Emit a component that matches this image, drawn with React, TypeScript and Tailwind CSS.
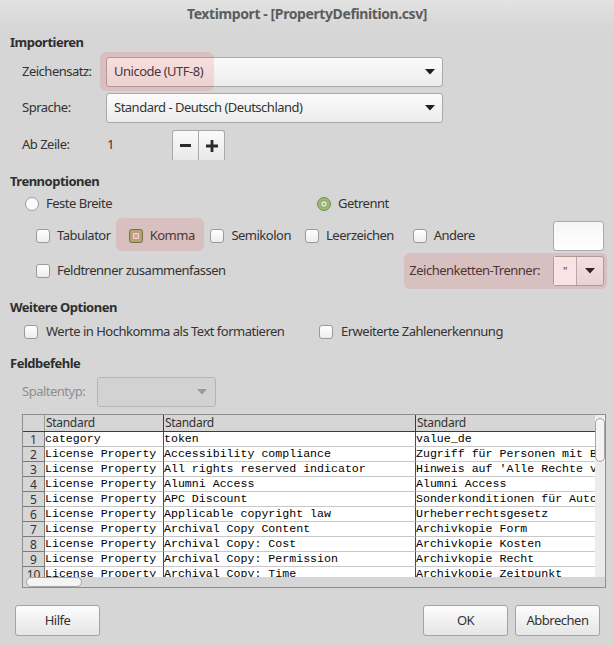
import React from "react";

const rows: [string, string, string][] = [
  ["category", "token", "value_de"],
  ["License Property", "Accessibility compliance", "Zugriff für Personen mit Behinderungen"],
  ["License Property", "All rights reserved indicator", "Hinweis auf 'Alle Rechte vorbehalten'"],
  ["License Property", "Alumni Access", "Alumni Access"],
  ["License Property", "APC Discount", "Sonderkonditionen für Autoren"],
  ["License Property", "Applicable copyright law", "Urheberrechtsgesetz"],
  ["License Property", "Archival Copy Content", "Archivkopie Form"],
  ["License Property", "Archival Copy: Cost", "Archivkopie Kosten"],
  ["License Property", "Archival Copy: Permission", "Archivkopie Recht"],
  ["License Property", "Archival Copy: Time", "Archivkopie Zeitpunkt"],
];

function Arrow({ color = "#1e1e1e" }: { color?: string }) {
  return (
    <svg width="10" height="6" viewBox="0 0 10 6">
      <polygon points="0,0 10,0 5,5.5" fill={color} />
    </svg>
  );
}

function Combo({ value, className }: { value: string; className: string }) {
  return (
    <div
      className={`flex h-[30px] items-center justify-between rounded-[3px] border border-[#a9a9a9] bg-gradient-to-b from-[#fbfbfb] to-[#ececec] pl-[7px] pr-[7px] text-[#333] ${className}`}
    >
      <span>{value}</span>
      <Arrow />
    </div>
  );
}

function Checkbox({ checked = false }: { checked?: boolean }) {
  if (checked) {
    return (
      <svg width="14" height="14" viewBox="0 0 14 14" className="shrink-0">
        <rect x="0.5" y="0.5" width="13" height="13" rx="2" fill="#aab57a" stroke="#6b7548" />
        <rect x="4" y="4" width="6" height="6" fill="#f6f2ee" />
        <path d="M5 5 L9 9 M9 5 L5 9" stroke="#c9a0a0" strokeWidth="1.2" />
      </svg>
    );
  }
  return (
    <span className="block h-[14px] w-[14px] shrink-0 rounded-[3px] border border-[#9a9a9a] bg-gradient-to-b from-white to-[#ededed]" />
  );
}

function Radio({ checked = false }: { checked?: boolean }) {
  return (
    <svg width="14" height="14" viewBox="0 0 14 14" className="shrink-0">
      {checked ? (
        <>
          <circle cx="7" cy="7" r="6.5" fill="#9dbb74" stroke="#6f8f4c" />
          <circle cx="7" cy="7" r="3.3" fill="#f2f2f2" stroke="#6f8f4c" strokeWidth="0.8" />
          <circle cx="7" cy="7" r="1.6" fill="#9fb58a" />
        </>
      ) : (
        <circle cx="7" cy="7" r="6.5" fill="#fafafa" stroke="#9a9a9a" />
      )}
    </svg>
  );
}

function Highlight({ className }: { className: string }) {
  return (
    <div
      className={`pointer-events-none absolute rounded-[6px] bg-[rgba(225,70,70,0.15)] ${className}`}
    />
  );
}

function Button({ label, className }: { label: string; className: string }) {
  return (
    <button
      className={`h-[31px] rounded-[3px] border border-[#a3a3a3] bg-gradient-to-b from-[#fcfcfc] to-[#e6e6e6] text-[#333] ${className}`}
    >
      {label}
    </button>
  );
}

function DataTable() {
  return (
    <div className="mt-[7px] flex h-[174px] w-[584px] flex-col border border-[#8e8e8e] bg-[#d6d6d6]">
      <div className="flex min-h-0 flex-1">
        <div className="w-[572px] overflow-hidden bg-white font-['Liberation_Mono',monospace] text-[11.6px] tracking-normal text-black">
          <div className="flex h-[17px] border-b border-[#3c3c3c] bg-[#d6d6d6] font-['Noto_Sans',sans-serif] text-[12px] leading-[16px] tracking-[-0.3px] text-[#333]">
            <div className="w-[22px] shrink-0 border-r border-[#9a9a9a]" />
            <div className="w-[119px] shrink-0 border-r border-[#3c3c3c] pl-[1px]">Standard</div>
            <div className="w-[252px] shrink-0 border-r border-[#3c3c3c] pl-[1px]">Standard</div>
            <div className="flex-1 pl-[1px]">Standard</div>
          </div>
          {rows.map((r, i) => (
            <div key={i} className="flex h-[15px] leading-[14px]">
              <div className="flex w-[22px] shrink-0 items-end justify-center overflow-hidden border-b border-r border-[#7a7a7a] bg-[#d6d6d6] font-['Noto_Sans',sans-serif] text-[12px] text-[#333]">
                <span className="leading-none">{i + 1}</span>
              </div>
              <div className="w-[119px] shrink-0 overflow-hidden whitespace-pre border-b border-r border-b-[#c8c8c8] border-r-[#4a4a4a]">
                {r[0]}
              </div>
              <div className="w-[252px] shrink-0 overflow-hidden whitespace-pre border-b border-r border-b-[#c8c8c8] border-r-[#4a4a4a]">
                {r[1]}
              </div>
              <div className="flex-1 overflow-hidden whitespace-pre border-b border-[#c8c8c8]">
                {r[2]}
              </div>
            </div>
          ))}
        </div>
        <div className="w-[10px] bg-[#ececec] pt-[3px]">
          <div className="h-[44px] w-[10px] rounded-[5px] border border-[#a6a6a6] bg-[#f4f4f4]" />
        </div>
      </div>
      <div className="h-[10px] pl-[3px]">
        <div className="h-[10px] w-[56px] rounded-[5px] border border-[#a6a6a6] bg-[#f4f4f4]" />
      </div>
    </div>
  );
}

export default function App() {
  return (
    <div className="flex h-[646px] w-[614px] flex-col overflow-hidden bg-[#d6d6d6] font-['Noto_Sans','DejaVu_Sans',sans-serif] text-[13px] tracking-[-0.5px] text-[#333]">
      <div className="flex h-[27px] shrink-0 items-center justify-center bg-gradient-to-b from-[#e3e3e3] to-[#d6d6d6] text-[14px] font-bold tracking-[-0.4px] text-[#5c5c5c]">
        Textimport - [PropertyDefinition.csv]
      </div>

      <div className="flex flex-col px-[10px]">
        <div className="mt-[6px] h-[18px] font-bold leading-[18px] text-[#2e2e2e]">Importieren</div>

        <div className="relative mt-[6px] flex items-center pl-[12px]">
          <span className="w-[84px]">Zeichensatz:</span>
          <Combo value="Unicode (UTF-8)" className="w-[337px]" />
          <Highlight className="left-[90px] top-[-5px] h-[39px] w-[114px]" />
        </div>

        <div className="mt-[6px] flex items-center pl-[12px]">
          <span className="w-[84px]">Sprache:</span>
          <Combo value="Standard - Deutsch (Deutschland)" className="w-[337px]" />
        </div>

        <div className="mt-[7px] flex items-center pl-[12px]">
          <span className="w-[85px]">Ab Zeile:</span>
          <span className="w-[65px]">1</span>
          <div className="flex h-[30px]">
            <div className="flex w-[27px] items-center justify-center rounded-tl-[3px] border border-b-0 border-[#a9a9a9] bg-gradient-to-b from-[#fbfbfb] to-[#e8e8e8]">
              <span className="block h-[3px] w-[11px] bg-[#2b2b2b]" />
            </div>
            <div className="flex w-[26px] items-center justify-center rounded-tr-[3px] border border-b-0 border-l-0 border-[#a9a9a9] bg-gradient-to-b from-[#fbfbfb] to-[#e8e8e8]">
              <svg width="12" height="12" viewBox="0 0 12 12">
                <path d="M4.6 0 H7.4 V4.6 H12 V7.4 H7.4 V12 H4.6 V7.4 H0 V4.6 H4.6 Z" fill="#2b2b2b" />
              </svg>
            </div>
          </div>
        </div>

        <div className="mt-[12px] h-[18px] font-bold leading-[18px] text-[#2e2e2e]">Trennoptionen</div>

        <div className="mt-[4px] flex h-[20px] items-center pl-[15px]">
          <div className="flex w-[292px] items-center gap-[7px]">
            <Radio />
            <span>Feste Breite</span>
          </div>
          <div className="flex items-center gap-[7px]">
            <Radio checked />
            <span>Getrennt</span>
          </div>
        </div>

        <div className="relative mt-[7px] flex h-[30px] items-center pl-[26px]">
          <div className="flex w-[93px] items-center gap-[7px]">
            <Checkbox />
            <span>Tabulator</span>
          </div>
          <div className="flex w-[82px] items-center gap-[7px]">
            <Checkbox checked />
            <span>Komma</span>
          </div>
          <div className="flex w-[95px] items-center gap-[7px]">
            <Checkbox />
            <span>Semikolon</span>
          </div>
          <div className="flex w-[108px] items-center gap-[7px]">
            <Checkbox />
            <span>Leerzeichen</span>
          </div>
          <div className="flex w-[141px] items-center gap-[7px]">
            <Checkbox />
            <span>Andere</span>
          </div>
          <div className="h-[30px] w-[51px] rounded-[3px] border border-[#a9a9a9] bg-gradient-to-b from-[#f6f6f6] to-white" />
          <Highlight className="left-[106px] top-[-3px] h-[33px] w-[88px]" />
        </div>

        <div className="relative mt-[5px] flex h-[30px] items-center pl-[26px]">
          <div className="flex flex-1 items-center gap-[7px]">
            <Checkbox />
            <span>Feldtrenner zusammenfassen</span>
          </div>
          <span className="mr-[13px]">Zeichenketten-Trenner:</span>
          <div className="flex h-[30px] w-[51px] rounded-[3px] border border-[#a9a9a9] bg-gradient-to-b from-[#fbfbfb] to-[#ececec]">
            <div className="flex w-[23px] items-center justify-center border-r border-[#b8b8b8] bg-white text-[11px]">"</div>
            <div className="flex flex-1 items-center justify-center">
              <Arrow />
            </div>
          </div>
          <Highlight className="left-[394px] top-[-3px] h-[36px] w-[203px]" />
        </div>

        <div className="mt-[12px] h-[18px] font-bold leading-[18px] text-[#2e2e2e]">Weitere Optionen</div>

        <div className="mt-[6px] flex h-[20px] items-center pl-[14px]">
          <div className="flex w-[295px] items-center gap-[8px]">
            <Checkbox />
            <span>Werte in Hochkomma als Text formatieren</span>
          </div>
          <div className="flex items-center gap-[8px]">
            <Checkbox />
            <span>Erweiterte Zahlenerkennung</span>
          </div>
        </div>

        <div className="mt-[12px] h-[18px] font-bold leading-[18px] text-[#2e2e2e]">Feldbefehle</div>

        <div className="mt-[5px] flex h-[30px] items-center pl-[12px]">
          <span className="w-[75px] text-[#8e8e8e]">Spaltentyp:</span>
          <div className="flex h-[30px] w-[119px] items-center justify-end rounded-[3px] border border-[#b4b4b4] bg-[#d2d2d2] pr-[8px]">
            <Arrow color="#9a9a9a" />
          </div>
        </div>

        <div className="pl-[12px]">
          <DataTable />
        </div>
      </div>

      <div className="mt-[17px] flex pl-[15px] pr-[14px]">
        <Button label="Hilfe" className="w-[85px]" />
        <div className="flex-1" />
        <div className="flex gap-[7px]">
          <Button label="OK" className="w-[85px]" />
          <Button label="Abbrechen" className="w-[85px]" />
        </div>
      </div>
    </div>
  );
}
